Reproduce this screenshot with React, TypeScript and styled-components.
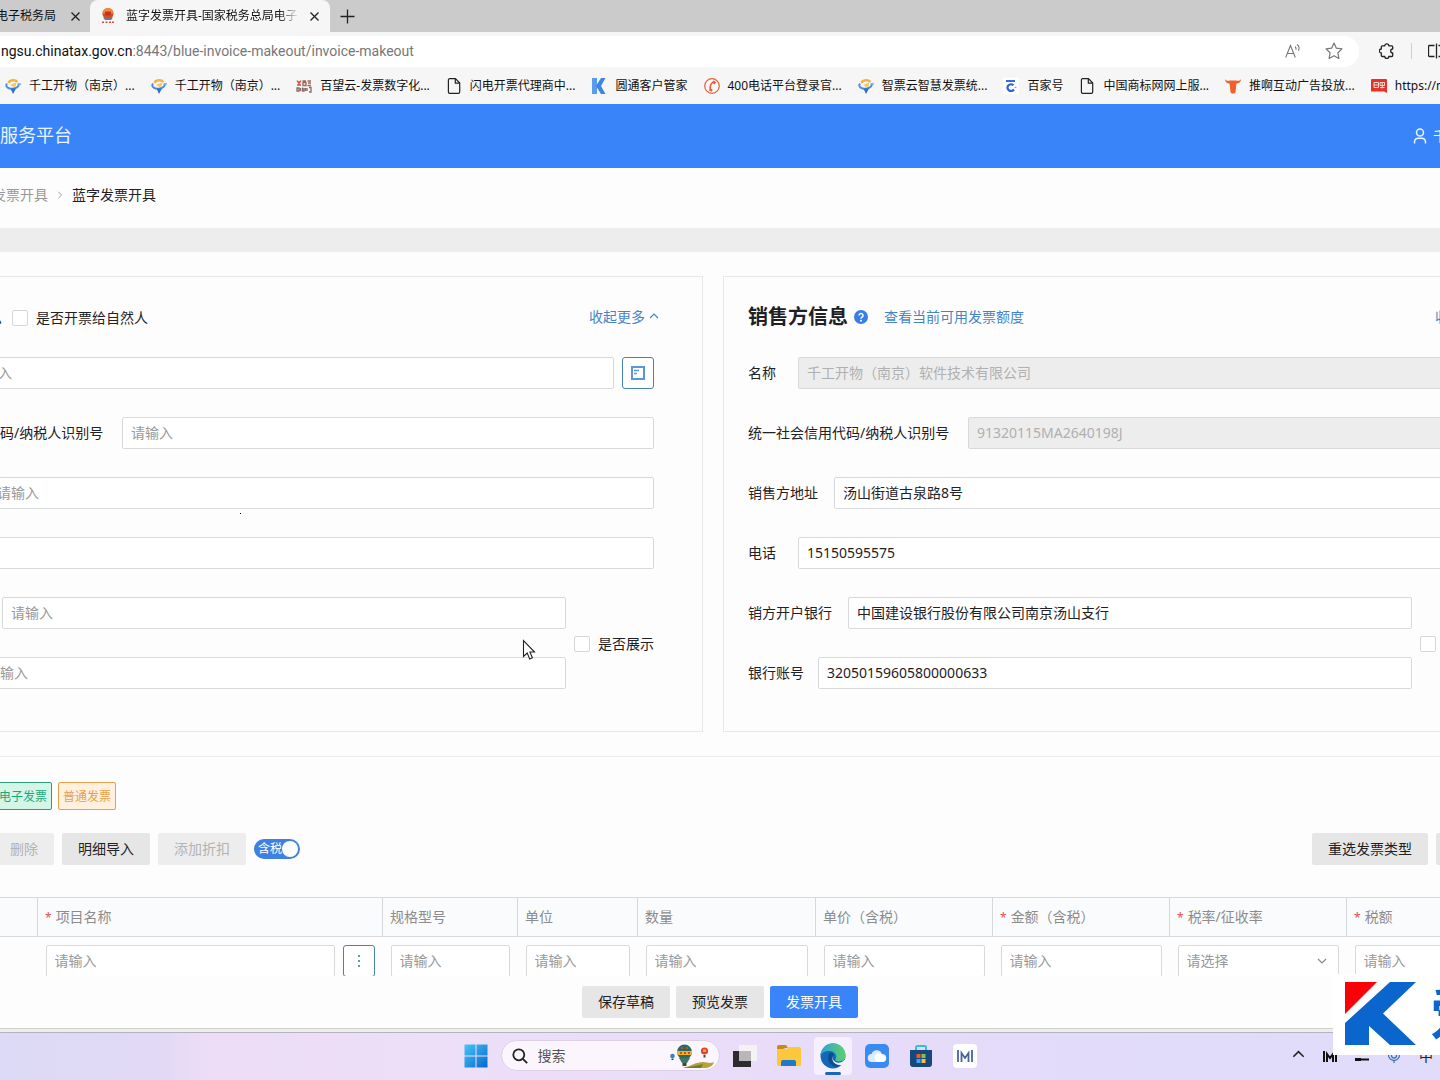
import React, { useId } from 'react';
import styled, { createGlobalStyle } from 'styled-components';

const GlobalStyle = createGlobalStyle`
  *, *::before, *::after { box-sizing: border-box; }
  body { margin: 0; overflow: hidden; }
  body, button, input, select {
    font-family: 'Noto Sans', 'Noto Sans CJK SC', sans-serif;
    font-size: 14px;
    line-height: 20px;
    color: #1f2124;
  }
  h1, h2, p { margin: 0; }
  a { text-decoration: none; color: inherit; }
  svg { display: block; flex: none; }
`;

const Screen = styled.div`
  position: relative;
  display: flex;
  flex-direction: column;
  height: 100vh;
  overflow: hidden;
  background: #fdfdfd;
`;

/* ---------- browser chrome ---------- */

const TabStrip = styled.div`
  display: flex;
  flex: none;
  height: 32px;
  background: #cbcbcb;
  font-size: 12px;
`;

const Tab = styled.div<{ $active?: boolean }>`
  display: flex;
  flex: none;
  align-items: center;
  justify-content: ${(p) => (p.$active ? 'flex-start' : 'flex-end')};
  gap: ${(p) => (p.$active ? '10px' : '14px')};
  width: ${(p) => (p.$active ? '240px' : '90px')};
  padding: ${(p) => (p.$active ? '0 10px' : '0 9px 0 0')};
  border-radius: 8px 8px 0 0;
  background: ${(p) => (p.$active ? '#f6f6f6' : 'transparent')};
  overflow: hidden;
  white-space: nowrap;
`;

const TabTitle = styled.span<{ $fade?: boolean }>`
  flex: ${(p) => (p.$fade ? '1' : 'none')};
  min-width: 0;
  overflow: hidden;
  color: #111;
  mask-image: ${(p) => (p.$fade ? 'linear-gradient(90deg, #000 88%, transparent)' : 'none')};
`;

const IconButton = styled.button`
  display: flex;
  flex: none;
  align-items: center;
  justify-content: center;
  padding: 0;
  border: 0;
  background: transparent;
  color: #222;
`;

const NewTab = styled(IconButton)`
  width: 34px;
`;

const Toolbar = styled.div`
  display: flex;
  flex: none;
  align-items: center;
  height: 38px;
  background: #f6f6f6;
`;

const AddressBar = styled.div`
  display: flex;
  flex: 1;
  align-items: center;
  gap: 24px;
  height: 31px;
  padding-right: 16px;
  border-radius: 0 16px 16px 0;
  background: #fff;
  color: #777;
`;

const Address = styled.p`
  flex: 1;
  padding-left: 1px;
  white-space: nowrap;
  font-family: Roboto, 'Noto Sans', sans-serif;
  b { font-weight: 400; color: #111; }
`;

const ToolbarEnd = styled.div`
  display: flex;
  align-items: center;
  gap: 16px;
  width: 81px;
  padding-left: 20px;
  overflow: hidden;
`;

const Divider = styled.span`
  flex: none;
  width: 1px;
  height: 16px;
  background: #cfcfcf;
`;

const Bookmarks = styled.nav`
  display: flex;
  flex: none;
  align-items: center;
  gap: 16px;
  height: 34px;
  padding: 0 0 2px 5px;
  background: #f6f6f6;
  overflow: hidden;
`;

const Bookmark = styled.a`
  display: flex;
  flex: none;
  align-items: center;
  gap: 8px;
  font-size: 12px;
  color: #111;
  white-space: nowrap;
`;

/* ---------- application ---------- */

const Banner = styled.header`
  display: flex;
  flex: none;
  align-items: center;
  justify-content: space-between;
  height: 64px;
  background: #3a84fa;
  color: #e8f4ff;
  overflow: hidden;
`;

const BannerTitle = styled.h1`
  padding-bottom: 2px;
  font-size: 18px;
  line-height: 24px;
  font-weight: 400;
`;

const Account = styled.a`
  display: flex;
  gap: 6px;
  align-items: center;
  width: 27px;
  white-space: nowrap;
`;

const Viewport = styled.main`
  flex: 1;
  min-height: 0;
  overflow: hidden;
`;

/* The form is wider than the window and is shown scrolled to its middle. */
const Sheet = styled.div`
  width: calc(100% + 280px);
  margin-left: -147px;
`;

const Breadcrumb = styled.nav`
  display: flex;
  align-items: center;
  gap: 8px;
  height: 60px;
  padding: 0 0 6px 139px;
  color: #999;
  strong { font-weight: 400; color: #1f2124; }
`;

const Band = styled.div`
  height: 24px;
  background: #ededed;
`;

const Parties = styled.div`
  display: grid;
  grid-template-columns: 1fr 1fr;
  gap: 20px;
  padding: 24px;
`;

const Panel = styled.section`
  display: flex;
  flex-direction: column;
  gap: 28px;
  padding: 24px 48px 42px 24px;
  border: 1px solid #e8e8e8;
`;

const PanelHead = styled.div`
  display: flex;
  align-items: center;
  height: 32px;
  margin: 0 -5px -4px 0;
`;

const Heading = styled.h2`
  font-size: 20px;
  line-height: 28px;
  font-weight: 700;
`;

const Link = styled.a`
  display: flex;
  align-items: center;
  gap: 4px;
  color: #4485c9;
`;

const Collapse = styled(Link)`
  margin-left: auto;
`;

const HelpLink = styled(Link)`
  gap: 16px;
  margin-left: 6px;
`;

const FieldRow = styled.div`
  display: flex;
  align-items: center;
  height: 32px;
`;

const FieldLabel = styled.label<{ $width: number }>`
  flex: none;
  width: ${(p) => p.$width}px;
  white-space: nowrap;
`;

const TextBox = styled.input`
  flex: 1;
  min-width: 0;
  width: 100%;
  height: 32px;
  padding: 0 8px 2px;
  border: 1px solid #d6dadd;
  border-radius: 2px;
  background: #fff;
  outline: 0;
  &::placeholder { color: #999; opacity: 1; }
  &:disabled { background: #ededed; color: #b0b0b0; }
`;

const SquareButton = styled.button`
  display: flex;
  flex: none;
  align-items: center;
  justify-content: center;
  width: 32px;
  height: 32px;
  margin-left: 8px;
  padding: 0;
  border: 1px solid #4682b4;
  border-radius: 3px;
  background: #fff;
  color: #5b97dc;
`;

const BankGroup = styled.div`
  display: flex;
  align-items: center;
  gap: 8px;
`;

const BankFields = styled.div`
  display: flex;
  flex: 1;
  flex-direction: column;
  gap: 28px;
`;

const Check = styled.label<{ $after?: boolean }>`
  display: flex;
  align-items: center;
  gap: 8px;
  padding-top: 2px;
  margin-left: ${(p) => (p.$after ? '10px' : '0')};
  white-space: nowrap;
  input {
    appearance: none;
    width: 16px;
    height: 16px;
    margin: 0;
    border: 1px solid #d6d6d6;
    border-radius: 2px;
    background: #fff;
  }
`;

const Details = styled.section`
  padding: 25px 24px 0;
  border-top: 1px solid #ebebeb;
`;

const TagRow = styled.div`
  display: flex;
  align-items: center;
  gap: 6px;
  height: 28px;
  margin-bottom: 23px;
  ${Heading} { min-width: 111px; }
`;

const Tag = styled.span<{ $tone: 'green' | 'orange' }>`
  padding: 4px 4px 2px;
  border: 1px solid ${(p) => (p.$tone === 'green' ? '#2a9d7c' : '#e8a04c')};
  border-radius: 2px;
  background: ${(p) => (p.$tone === 'green' ? '#d3f6e6' : '#fff1dd')};
  color: ${(p) => (p.$tone === 'green' ? '#1fa57c' : '#e8a04c')};
  font-size: 12px;
`;

const Actions = styled.div`
  display: flex;
  align-items: center;
  gap: 8px;
  margin-bottom: 32px;
`;

const Button = styled.button<{ $primary?: boolean; $min?: number }>`
  height: 32px;
  min-width: ${(p) => p.$min ?? 0}px;
  padding: 0 16px;
  border: 0;
  border-radius: 2px;
  background: ${(p) => (p.$primary ? '#3a84fa' : '#e6e6e6')};
  color: ${(p) => (p.$primary ? '#fff' : '#1f2124')};
  white-space: nowrap;
  &:disabled { background: #ededed; color: #b3b3b3; }
`;

const Spacer = styled.span`
  flex: 1;
`;

const Switch = styled.label`
  display: flex;
  align-items: center;
  width: 46px;
  height: 20px;
  padding: 0 2px 0 4px;
  border-radius: 10px;
  background: #4080e0;
  color: #fff;
  font-size: 12px;
  white-space: nowrap;
  input {
    appearance: none;
    flex: none;
    width: 16px;
    height: 16px;
    margin: 0;
    border-radius: 50%;
    background: #fff;
  }
`;

const Table = styled.table`
  width: 100%;
  table-layout: fixed;
  border-collapse: collapse;
  th {
    height: 39px;
    padding: 0 7px;
    border: 1px solid #d5d9de;
    background: #f9fbfd;
    color: #8c8c8c;
    font-weight: 400;
    text-align: left;
    white-space: nowrap;
  }
  td { padding: 8px 8px 12px; }
`;

const Required = styled.span`
  margin-right: 4px;
  color: #e05050;
  font-size: 12px;
`;

const Cell = styled.div`
  display: flex;
`;

const Picker = styled.span`
  display: grid;
  flex: 1;
  align-items: center;
  select, svg { grid-area: 1 / 1; }
  select {
    appearance: none;
    width: 100%;
    height: 32px;
    padding: 0 8px;
    border: 1px solid #d6dadd;
    border-radius: 2px;
    background: #fff;
    color: #999;
  }
  svg { justify-self: end; margin-right: 12px; pointer-events: none; }
`;

const ActionBar = styled.div`
  display: flex;
  flex: none;
  justify-content: center;
  gap: 6px;
  padding: 10px 0;
  background: #fdfdfd;
`;

const WindowEdge = styled.div`
  flex: none;
  height: 4px;
  border-top: 1px solid #d0d0cc;
  background: #eeeeee;
`;

/* ---------- taskbar ---------- */

const Taskbar = styled.footer`
  display: grid;
  grid-template-columns: 1fr auto 1fr;
  flex: none;
  align-items: center;
  height: 48px;
  padding-bottom: 2px;
  border-top: 1px solid #b5b3c0;
  background: linear-gradient(90deg, #dcdaf6 0%, #e2d9f5 11%, #ecdcf6 14%, #eedff8 30%, #e8dcf8 55%, #e2dbfa 75%, #e1dcfb 100%);
`;

const Dock = styled.div`
  display: flex;
  grid-column: 2;
  align-items: center;
  gap: 6px;
`;

const DockButton = styled.button<{ $active?: boolean }>`
  display: flex;
  position: relative;
  align-items: center;
  justify-content: center;
  width: 38px;
  height: 38px;
  padding: 0;
  border: 0;
  border-radius: 4px;
  background: ${(p) => (p.$active ? '#f6effc' : 'transparent')};
  &::after {
    content: '';
    display: ${(p) => (p.$active ? 'block' : 'none')};
    position: absolute;
    left: 11px;
    bottom: 0;
    width: 16px;
    height: 3px;
    border-radius: 2px;
    background: #1768b8;
  }
`;

const SearchBox = styled.label`
  display: flex;
  align-items: center;
  gap: 10px;
  width: 219px;
  height: 31px;
  padding: 0 4px 0 10px;
  border: 1px solid #ddd0e6;
  border-radius: 16px;
  background: #fbf6fe;
  input {
    flex: 1;
    min-width: 0;
    padding: 0;
    border: 0;
    outline: 0;
    background: transparent;
    &::placeholder { color: #555; opacity: 1; }
  }
`;

const Tray = styled.div`
  display: flex;
  align-items: center;
  justify-content: flex-end;
  gap: 12px;
  padding-right: 4px;
`;

const TrayItem = styled(IconButton)`
  width: 20px;
  height: 20px;
`;

/* ---------- overlays ---------- */

const Watermark = styled.div`
  position: absolute;
  right: 0;
  bottom: 25px;
  display: flex;
  gap: 14px;
  width: 107px;
  height: 81px;
  padding: 8px 0 0 12px;
  background: #fff;
  color: #0a66cc;
  font-size: 56px;
  line-height: 60px;
  font-weight: 700;
  overflow: hidden;
`;

const Pointer = styled.svg`
  position: absolute;
  left: 522px;
  top: 639px;
`;

const Speck = styled.span`
  position: absolute;
  left: 240px;
  top: 513px;
  width: 1px;
  height: 1px;
  background: #000;
`;

/* ---------- drawings ---------- */

const Close = () => (
  <svg width="11" height="11" viewBox="0 0 11 11" stroke="#222" strokeWidth="1.3">
    <path d="M1.5 1.5l8 8M9.5 1.5l-8 8" />
  </svg>
);

const Chevron = ({ dir, size = 10, color = 'currentColor' }: { dir: 'up' | 'down' | 'right'; size?: number; color?: string }) => (
  <svg width={size} height={size} viewBox="0 0 10 10" fill="none" stroke={color} strokeWidth="1.2">
    <path d={{ up: 'M1 6l4-4 4 4', down: 'M1 3l4 4 4-4', right: 'M3 1l4 4-4 4' }[dir]} />
  </svg>
);

const Emblem = () => (
  <svg width="16" height="16" viewBox="0 0 16 16">
    <circle cx="8" cy="5.5" r="5.5" fill="#d9482b" />
    <path d="M2.500 5.500a5.500 5.500 0 0 1 11 0z" fill="#f08a3c" />
    <path d="M5 3.500h6v4H5z" fill="#c8321f" />
    <path d="M3 9.500h10l-2 2.500H5z" fill="#6b7a86" />
    <path d="M2 14.200h2m1.500 0h2m1.500 0h2m1 0h2" stroke="#d8503c" strokeWidth="1.400" />
  </svg>
);

const CloudMark = () => (
  <svg width="16" height="16" viewBox="0 0 16 16" fill="none">
    <path d="M3.500 5a5 3.800 0 0 1 9-1" stroke="#f2b440" strokeWidth="2.400" />
    <path d="M5 7l6-2.500v3.500L8.500 9z" fill="#f6c860" />
    <path d="M2 5.500C-.500 9 4 11.500 9 10.500c4-.800 5.500-3 4.500-5" stroke="#4a90dc" strokeWidth="2" />
    <path d="M5.500 10.500h5.500L8 16z" fill="#2f6fc8" />
    <path d="M12.500 6H16" stroke="#7ab4ec" strokeWidth="1.500" />
  </svg>
);

const BaiwangMark = () => (
  <svg width="16" height="16" viewBox="0 0 16 16" fill="none" strokeWidth="1.300">
    <path d="M1 2.500l2 3 2-3M1 7h4M3 3v4" stroke="#e0502c" />
    <path d="M6.500 3H10M7 4.500h3v3H7zM11.500 3H15M12 5h3M11.500 7.500H15" stroke="#9a6a5c" />
    <path d="M1 10h2v3H1zM4.500 10v3M6.500 9.500v3.500h1.500v-3M9.500 13v-3M11 10v3M13 9.500h2v4.500h-2" stroke="#8a6a66" />
  </svg>
);

const PageMark = () => (
  <svg width="16" height="16" viewBox="0 0 16 16" fill="none" stroke="#222" strokeWidth="1.200" strokeLinejoin="round">
    <path d="M3.700.700h5.800L13.700 5v9a1.300 1.300 0 0 1-1.300 1.300H3.700A1.300 1.300 0 0 1 2.400 14V2A1.300 1.300 0 0 1 3.700.700z" />
    <path d="M9.300.900v4.300h4.300" />
  </svg>
);

const KMark = () => (
  <svg width="16" height="16" viewBox="0 0 16 16">
    <path d="M1 0h5v16H1z" fill="#5a9cec" />
    <path d="M5 8l5-8h4.500l-4.500 8 4.500 8H10z" fill="#3f84e0" />
  </svg>
);

const PhoneMark = () => (
  <svg width="16" height="16" viewBox="0 0 16 16" fill="none" stroke="#e2603a">
    <circle cx="8" cy="8" r="7.300" strokeWidth="1.200" />
    <path d="M10.500 3.500C7.500 4.500 5.500 8 6.300 12.500" strokeWidth="1.800" />
    <path d="M9 3.500l2.300 2M5.800 11.500l2.400 1.300" strokeWidth="2.400" />
  </svg>
);

const BaijiaMark = () => (
  <svg width="16" height="16" viewBox="0 0 16 16" fill="none">
    <rect width="16" height="16" fill="#fff" />
    <path d="M3 3h9" stroke="#2f6fe0" strokeWidth="2" />
    <path d="M10.500 7.200a3.600 3.300 0 1 0 .500 4.300" stroke="#2f5fe0" strokeWidth="2.200" />
    <path d="M11.500 9.500h2" stroke="#7ab0f0" strokeWidth="1.500" />
  </svg>
);

const BullMark = () => (
  <svg width="16" height="16" viewBox="0 0 16 16" fill="#f0602c">
    <path d="M0 1c1 2 3 2 5 1.500h6C13 3 15 3 16 1c0 3-2 4.500-4.500 4.500L10.500 14c-.500 2-4.500 2-5 0L4.500 5.500C2 5.500 0 4 0 1z" />
  </svg>
);

const RedMark = () => (
  <svg width="16" height="16" viewBox="0 0 16 16">
    <path d="M1 1h14a1 1 0 0 1 1 1v13l-3-1.500H0V2a1 1 0 0 1 1-1z" fill="#e2322a" />
    <path d="M3 4.500h4.500v5H3zM3 7h4.500M9 4.500h4.500v3H9zM9 9.500h4.500M11.200 4.500v6" fill="none" stroke="#fbd8d0" />
  </svg>
);

const Balloons = () => (
  <svg width="46" height="26" viewBox="0 0 46 26">
    <circle cx="3.500" cy="13" r="2.300" fill="#2f86c8" />
    <path d="M2.500 15.500h2v1.500h-2z" fill="#444" />
    <circle cx="15.500" cy="9" r="7.500" fill="#2b6a62" />
    <path d="M8 8h15v4H8z" fill="#f0b030" />
    <path d="M10 15h11l-3 5h-5z" fill="#3b7a6a" />
    <path d="M12 4h2v2h-2zM17 4h2v2h-2zM11 9h2v2h-2zM15 9h2v2h-2zM19 9h2v2h-2z" fill="#c8501e" />
    <path d="M13.500 20h4v3h-4z" fill="#5a4020" />
    <circle cx="35.500" cy="8" r="3.600" fill="#d9482b" />
    <path d="M34 6.500h3v2.500h-3z" fill="#f0b030" />
    <path d="M34.500 12h2v2.500h-2z" fill="#444" />
    <path d="M14 25c8-2 13-6 20-6 5 0 6 2 11 0-1 4-5 6-10 6z" fill="#b8a23c" />
    <path d="M14 25c8-1 15-3 20-4l-2 4z" fill="#6f7d34" />
  </svg>
);

const WindowsMark = () => (
  <svg width="24" height="24" viewBox="0 0 24 24">
    <defs>
      <linearGradient id="win" x1="0" y1="0" x2="1" y2="1">
        <stop offset="0" stopColor="#48c4f8" />
        <stop offset="1" stopColor="#0468cc" />
      </linearGradient>
    </defs>
    <path d="M.500.500h11v11h-11zM12.500.500h11v11h-11zM.500 12.500h11v11h-11zM12.500 12.500h11v11h-11z" fill="url(#win)" />
  </svg>
);

const TaskView = () => (
  <svg width="24" height="24" viewBox="0 0 24 24">
    <path d="M0 7h18v16H0z" fill="#2c2c2e" />
    <path d="M6 1h18v16H6z" fill="#f4f2f4" />
    <path d="M6 7h12v10H6z" fill="#b8b6b8" />
  </svg>
);

const Folder = () => (
  <svg width="26" height="24" viewBox="0 0 26 24">
    <path d="M1 3a2 2 0 0 1 2-2h7l2 3h-2L1 7z" fill="#c98a14" />
    <path d="M1 5h10l2-2h10a2 2 0 0 1 2 2v17H3a2 2 0 0 1-2-2z" fill="#fbc73c" />
    <path d="M5 22v-4a2 2 0 0 1 2-2h11a2 2 0 0 1 2 2v4z" fill="#1f78c8" />
  </svg>
);

const EdgeMark = () => (
  <svg width="26" height="26" viewBox="0 0 24 24">
    <defs>
      <linearGradient id="edgeTop" x1="0" y1="0" x2="1" y2="0">
        <stop offset="0" stopColor="#2ba3dc" />
        <stop offset="1" stopColor="#5fd06a" />
      </linearGradient>
    </defs>
    <circle cx="12" cy="12" r="11.500" fill="#1468b8" />
    <path d="M.500 11.500A11.500 11.500 0 0 1 23.500 12c0 3.500-3 5-6 5-2.500 0-4-1.200-3-2.500C16 12 14 8 10 7.500 5.500 7 1.500 9 .500 11.500z" fill="url(#edgeTop)" />
    <path d="M9.500 8.500c-4 4-2 11 3.500 13 3.500 1 7-.500 8.500-3-5 2.500-10 0-10-4.500 0-1.500.500-2.500 1.500-3-1-1.500-2-2.300-3.500-2.500z" fill="#0c4c90" />
    <path d="M12.500 11.500c-1.500 2.500-.500 5.500 3 6.500 2.500.700 5-.200 8-3l.500 4-2 1c-5 1.500-10-1-10.500-5 0-1.500.300-2.500 1-3.500z" fill="#f6effc" />
  </svg>
);

const CloudApp = () => (
  <svg width="24" height="24" viewBox="0 0 24 24">
    <rect width="24" height="24" rx="5" fill="#3a8af4" />
    <path d="M7 18a4 4 0 0 1-.500-8 5.500 5.500 0 0 1 10.500 0A4 4 0 0 1 17.500 18z" fill="#dcecff" />
    <path d="M13 18a4.500 4.500 0 1 1 5-6.500 3.300 3.300 0 0 1 0 6.500z" fill="#fff" />
  </svg>
);

const StoreApp = () => (
  <svg width="24" height="24" viewBox="0 0 24 24">
    <path d="M7 7V3.500A1.500 1.500 0 0 1 8.500 2h7A1.500 1.500 0 0 1 17 3.500V7" fill="none" stroke="#38bcd8" strokeWidth="2" />
    <path d="M1 6h22v14a3 3 0 0 1-3 3H4a3 3 0 0 1-3-3z" fill="#17477c" />
    <path d="M7.500 10h4v4h-4z" fill="#f0582c" />
    <path d="M12.500 10h4v4h-4z" fill="#84c440" />
    <path d="M7.500 15h4v4h-4z" fill="#38a8e8" />
    <path d="M12.500 15h4v4h-4z" fill="#fbc030" />
  </svg>
);

const BarsApp = () => (
  <svg width="24" height="24" viewBox="0 0 24 24">
    <rect width="24" height="24" rx="4" fill="#fff" />
    <path d="M5 6v12M8.500 18V9l3.500 5 3.500-5v9M19 6v12" fill="none" stroke="#4a6498" strokeWidth="1.800" />
  </svg>
);

/* ---------- data ---------- */

const bookmarks: [string, React.FC][] = [
  ['千工开物（南京）...', CloudMark],
  ['千工开物（南京）...', CloudMark],
  ['百望云-发票数字化...', BaiwangMark],
  ['闪电开票代理商中...', PageMark],
  ['圆通客户管家', KMark],
  ['400电话平台登录官...', PhoneMark],
  ['智票云智慧发票统...', CloudMark],
  ['百家号', BaijiaMark],
  ['中国商标网网上服...', PageMark],
  ['推啊互动广告投放...', BullMark],
  ['https://m', RedMark],
];

const columns: { title: string; width?: number; required?: boolean; kind?: 'picker' | 'lookup' }[] = [
  { title: '项目名称', width: 345, required: true, kind: 'lookup' },
  { title: '规格型号', width: 135 },
  { title: '单位', width: 120 },
  { title: '数量', width: 178 },
  { title: '单价（含税）', width: 177 },
  { title: '金额（含税）', width: 177, required: true },
  { title: '税率/征收率', width: 177, required: true, kind: 'picker' },
  { title: '税额', width: 177, required: true },
];

type FieldProps = { label: string; width: number; value?: string; hint?: string; disabled?: boolean; children?: React.ReactNode };

const Field = ({ label, width, value, hint = '请输入', disabled, children }: FieldProps) => {
  const id = useId();
  return (
    <FieldRow>
      <FieldLabel htmlFor={id} $width={width}>{label}</FieldLabel>
      <TextBox id={id} defaultValue={value} placeholder={hint} disabled={disabled} />
      {children}
    </FieldRow>
  );
};

const ShowCheck = () => (
  <Check>
    <input type="checkbox" />
    是否展示
  </Check>
);

export default function App() {
  return (
    <Screen>
      <GlobalStyle />
      <TabStrip>
        <Tab>
          <TabTitle>电子税务局</TabTitle>
          <IconButton aria-label="关闭标签页"><Close /></IconButton>
        </Tab>
        <Tab $active>
          <Emblem />
          <TabTitle $fade>蓝字发票开具-国家税务总局电子</TabTitle>
          <IconButton aria-label="关闭标签页"><Close /></IconButton>
        </Tab>
        <NewTab aria-label="新建标签页">
          <svg width="15" height="15" viewBox="0 0 15 15" stroke="#222" strokeWidth="1.300"><path d="M7.500.500v14M.500 7.500h14" /></svg>
        </NewTab>
      </TabStrip>
      <Toolbar>
        <AddressBar>
          <Address><b>ngsu.chinatax.gov.cn</b>:8443/blue-invoice-makeout/invoice-makeout</Address>
          <IconButton aria-label="大声朗读">
            <svg width="16" height="16" viewBox="0 0 16 16" fill="none" stroke="#777" strokeWidth="1.100">
              <path d="M.700 14.500L5.500 2.500l4.800 12M2.500 10.500h6M10 3.500c1 .800 1.300 2 1 3.300M12 1.500c2 1.300 2.500 3.800 1.500 6.300" />
            </svg>
          </IconButton>
          <IconButton aria-label="收藏">
            <svg width="18" height="18" viewBox="0 0 18 18" fill="none" stroke="#777" strokeWidth="1.200" strokeLinejoin="round">
              <path d="M9 1l2.400 5.200 5.600.700-4.100 3.900 1 5.700L9 13.700l-4.900 2.800 1-5.700L1 6.900l5.600-.700z" />
            </svg>
          </IconButton>
        </AddressBar>
        <ToolbarEnd>
          <IconButton aria-label="扩展">
            <svg width="16" height="16" viewBox="0 0 16 16" fill="none" stroke="#222" strokeWidth="1.300" strokeLinejoin="round">
              <path d="M3.300 2.800h2.500a2 2 0 0 1 4 0h2.900a1 1 0 0 1 1 1V6a2 2 0 0 0 0 4v2.500a1 1 0 0 1-1 1H9.800a2 2 0 0 1-4 0H3.300a1 1 0 0 1-1-1V10a2 2 0 0 1 0-4V3.800a1 1 0 0 1 1-1z" />
            </svg>
          </IconButton>
          <Divider />
          <IconButton aria-label="分屏">
            <svg width="18" height="16" viewBox="0 0 18 16" fill="none" stroke="#222" strokeWidth="1.300">
              <path d="M6.500 2.500h-5a1 1 0 0 0-1 1v9a1 1 0 0 0 1 1h5M8.500.500v15M10.500 2.500h6a1 1 0 0 1 1 1v9a1 1 0 0 1-1 1h-6" />
            </svg>
          </IconButton>
        </ToolbarEnd>
      </Toolbar>
      <Bookmarks aria-label="收藏夹栏">
        {bookmarks.map(([title, Mark], i) => (
          <Bookmark href="#" key={i}><Mark />{title}</Bookmark>
        ))}
      </Bookmarks>

      <Banner>
        <BannerTitle>服务平台</BannerTitle>
        <Account href="#">
          <svg width="14" height="16" viewBox="0 0 14 16" fill="none" stroke="currentColor" strokeWidth="1.500">
            <circle cx="7" cy="4.500" r="3.500" />
            <path d="M1.500 15.500v-1.500a4 4 0 0 1 4-3.700h3a4 4 0 0 1 4 3.700v1.500" />
          </svg>
          千
        </Account>
      </Banner>

      <Viewport>
        <Sheet>
          <Breadcrumb aria-label="面包屑">
            <a href="#">发票开具</a>
            <Chevron dir="right" size={8} />
            <strong>蓝字发票开具</strong>
          </Breadcrumb>
          <Band />
          <Parties>
            <Panel>
              <PanelHead>
                <Heading>购买方信息</Heading>
                <Check $after>
                  <input type="checkbox" />
                  是否开票给自然人
                </Check>
                <Collapse href="#">收起更多 <Chevron dir="up" /></Collapse>
              </PanelHead>
              <Field label="名称" width={59}>
                <SquareButton aria-label="选择购买方">
                  <svg width="14" height="14" viewBox="0 0 14 14" fill="none" stroke="currentColor">
                    <rect x="1" y="1" width="12" height="12" strokeWidth="2" />
                    <path d="M3 4.500h5M3 7.500h3" strokeWidth="1.400" />
                  </svg>
                </SquareButton>
              </Field>
              <Field label="统一社会信用代码/纳税人识别号" width={220} />
              <Field label="购买方地址" width={86} />
              <Field label="电话" width={50} hint="" />
              <BankGroup>
                <BankFields>
                  <Field label="购方开户银行" width={100} />
                  <Field label="银行账号" width={75} />
                </BankFields>
                <ShowCheck />
              </BankGroup>
            </Panel>
            <Panel>
              <PanelHead>
                <Heading>销售方信息</Heading>
                <HelpLink href="#">
                  <svg width="14" height="14" viewBox="0 0 14 14">
                    <circle cx="7" cy="7" r="7" fill="#3a7de8" />
                    <path d="M5 5.500a2 2 0 1 1 3 1.700c-.700.400-1 .700-1 1.500" fill="none" stroke="#fff" strokeWidth="1.500" />
                    <circle cx="7" cy="10.700" r="1" fill="#fff" />
                  </svg>
                  查看当前可用发票额度
                </HelpLink>
                <Collapse href="#">收起更多 <Chevron dir="up" /></Collapse>
              </PanelHead>
              <Field label="名称" width={50} value="千工开物（南京）软件技术有限公司" disabled />
              <Field label="统一社会信用代码/纳税人识别号" width={220} value="91320115MA2640198J" disabled />
              <Field label="销售方地址" width={86} value="汤山街道古泉路8号" />
              <Field label="电话" width={50} value="15150595575" />
              <BankGroup>
                <BankFields>
                  <Field label="销方开户银行" width={100} value="中国建设银行股份有限公司南京汤山支行" />
                  <Field label="银行账号" width={70} value="32050159605800000633" />
                </BankFields>
                <ShowCheck />
              </BankGroup>
            </Panel>
          </Parties>

          <Details>
            <TagRow>
              <Heading>开票信息</Heading>
              <Tag $tone="green">电子发票</Tag>
              <Tag $tone="orange">普通发票</Tag>
            </TagRow>
            <Actions>
              <Button $min={109}>增行</Button>
              <Button disabled>删除</Button>
              <Button>明细导入</Button>
              <Button disabled>添加折扣</Button>
              <Switch>
                含税
                <input type="checkbox" role="switch" defaultChecked />
              </Switch>
              <Spacer />
              <Button>重选发票类型</Button>
              <Button $min={113}>更多</Button>
            </Actions>
            <Table>
              <colgroup>
                <col style={{ width: 160 }} />
                {columns.map((c) => <col key={c.title} style={{ width: c.width }} />)}
                <col />
              </colgroup>
              <thead>
                <tr>
                  <th />
                  {columns.map((c) => (
                    <th key={c.title} scope="col">
                      {c.required && <Required>*</Required>}
                      {c.title}
                    </th>
                  ))}
                  <th />
                </tr>
              </thead>
              <tbody>
                <tr>
                  <td />
                  {columns.map((c) => (
                    <td key={c.title}>
                      <Cell>
                        {c.kind === 'picker' ? (
                          <Picker>
                            <select aria-label={c.title}><option>请选择</option></select>
                            <Chevron dir="down" color="#888" />
                          </Picker>
                        ) : (
                          <TextBox aria-label={c.title} placeholder="请输入" />
                        )}
                        {c.kind === 'lookup' && (
                          <SquareButton aria-label="选择项目">
                            <svg width="4" height="14" viewBox="0 0 4 14" fill="currentColor">
                              <path d="M1 1h2v2H1zM1 6h2v2H1zM1 11h2v2H1z" />
                            </svg>
                          </SquareButton>
                        )}
                      </Cell>
                    </td>
                  ))}
                  <td />
                </tr>
              </tbody>
            </Table>
          </Details>
        </Sheet>
      </Viewport>

      <ActionBar>
        <Button>保存草稿</Button>
        <Button>预览发票</Button>
        <Button $primary>发票开具</Button>
      </ActionBar>
      <WindowEdge />

      <Taskbar>
        <Dock>
          <DockButton aria-label="开始"><WindowsMark /></DockButton>
          <SearchBox>
            <svg width="16" height="16" viewBox="0 0 16 16" fill="none" stroke="#222" strokeWidth="1.800">
              <circle cx="6.800" cy="6.800" r="5.500" />
              <path d="M10.800 10.800l4.400 4.400" />
            </svg>
            <input placeholder="搜索" aria-label="搜索" />
            <Balloons />
          </SearchBox>
          <DockButton aria-label="任务视图"><TaskView /></DockButton>
          <DockButton aria-label="文件资源管理器"><Folder /></DockButton>
          <DockButton aria-label="浏览器" $active><EdgeMark /></DockButton>
          <DockButton aria-label="云盘"><CloudApp /></DockButton>
          <DockButton aria-label="应用商店"><StoreApp /></DockButton>
          <DockButton aria-label="助手"><BarsApp /></DockButton>
        </Dock>
        <Tray>
          <TrayItem aria-label="显示隐藏的图标"><Chevron dir="up" size={13} /></TrayItem>
          <TrayItem aria-label="助手">
            <svg width="14" height="14" viewBox="0 0 14 14" fill="none" stroke="#111" strokeWidth="2">
              <path d="M1 2v11M4 13V5l3 4 3-4v8M13 2v11" />
            </svg>
          </TrayItem>
          <TrayItem aria-label="设备">
            <svg width="14" height="14" viewBox="0 0 14 14" stroke="#111">
              <path d="M0 10.500h6" strokeWidth="3" />
              <path d="M5 10.500h9" strokeWidth="2" />
            </svg>
          </TrayItem>
          <TrayItem aria-label="麦克风">
            <svg width="14" height="16" viewBox="0 0 14 16" fill="none" stroke="#3a74b8" strokeWidth="1.300">
              <rect x="4.500" y="1" width="5" height="9" rx="2.500" />
              <path d="M1.500 7a5.500 5.500 0 0 0 11 0M7 12.500V15" />
            </svg>
          </TrayItem>
          <TrayItem aria-label="输入法">中</TrayItem>
        </Tray>
      </Taskbar>

      <Speck />
      <Pointer width="14" height="22" viewBox="0 0 14 22">
        <path d="M1.500 1.500v16l3.700-3.500 2.500 6 2.700-1.200-2.500-5.800h4.600z" fill="#fff" stroke="#222" strokeWidth="1.100" />
      </Pointer>
      <Watermark>
        <svg width="71" height="63" viewBox="0 0 71 63">
          <path d="M0 0h32L0 32z" fill="#fb0007" />
          <path d="M45 0h26L38 31.500 71 63H45L24 44v19H0V41z" fill="#0a66cc" />
        </svg>
        <span>爱</span>
      </Watermark>
    </Screen>
  );
}
